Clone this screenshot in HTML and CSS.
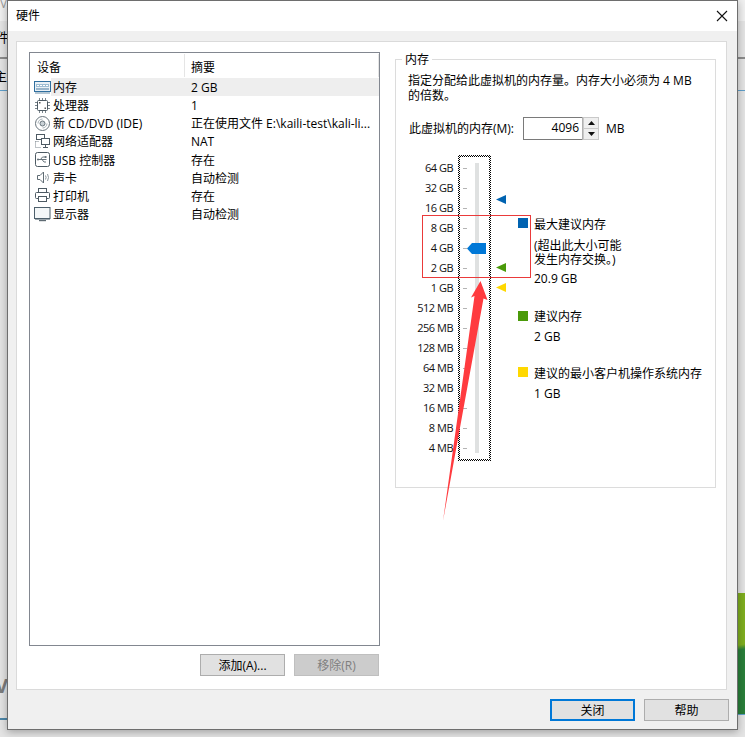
FILE: index.html
```html
<!DOCTYPE html>
<html lang="zh-CN">
<head>
<meta charset="utf-8">
<title>硬件</title>
<link rel="stylesheet" href="styles.css">
</head>
<body>
<div class="desktop">
  <div class="back-top"><span class="back-v">V</span></div>
  <span class="back-a">件(</span>
  <span class="back-b">主</span>
  <span class="back-c">V</span>
  <div class="back-line1"></div>
  <div class="back-line2"></div>
  <div class="back-line3"></div>
  <div class="back-green"></div>
</div>

<section class="dialog">
  <header class="titlebar">
    <span>硬件</span>
    <svg class="close-x" viewBox="0 0 12 12" width="12" height="12"><path d="M1 1L11 11M11 1L1 11" stroke="#111" stroke-width="1.1" fill="none"/></svg>
  </header>

  <div class="dialog-body">
    <div class="panel">
      <div class="left-col">
        <div class="list">
          <div class="list-head">
            <div class="head-a">设备</div>
            <div class="head-b">摘要</div>
          </div>
          <div class="row selected">
            <div class="ic"><svg viewBox="0 0 17 14" width="17" height="14"><rect x="0.5" y="1.5" width="16" height="10" fill="#e8f0f6" stroke="#2f6f9f"/><rect x="2" y="4" width="13" height="3" fill="#9dbdd3"/><path d="M3 5.5h2M6 5.5h2M9 5.5h2M12 5.5h2" stroke="#fff"/><path d="M2 9h13" stroke="#4a7a9f"/><path d="M1 13h15" stroke="#6a8ea8"/></svg></div>
            <div class="name">内存</div><div class="val">2 GB</div>
          </div>
          <div class="row">
            <div class="ic"><svg viewBox="0 0 17 17" width="17" height="17"><rect x="3.5" y="3.5" width="10" height="10" rx="1" fill="#fff" stroke="#4d5a63"/><path d="M5.5 1v2M8.5 1v2M11.5 1v2M5.5 14v2M8.5 14v2M11.5 14v2M1 5.500h2M1 8.500h2M1 11.500h2M14 5.500h2M14 8.500h2M14 11.500h2" stroke="#7a858c"/><rect x="5" y="5" width="1.500" height="1.500" fill="#555"/><rect x="10.500" y="10.500" width="1.500" height="1.500" fill="#555"/></svg></div>
            <div class="name">处理器</div><div class="val">1</div>
          </div>
          <div class="row">
            <div class="ic"><svg viewBox="0 0 17 17" width="17" height="17"><circle cx="8.500" cy="8.500" r="7" fill="#fff" stroke="#68747c"/><circle cx="8.500" cy="8.500" r="2.500" fill="#c9d1d6" stroke="#68747c"/><path d="M4 8.500a4.500 4.500 0 0 1 4.500-4.500" stroke="#a8b2b8" fill="none"/><path d="M13 8.500a4.500 4.500 0 0 1-4.500 4.500" stroke="#a8b2b8" fill="none"/></svg></div>
            <div class="name">新 CD/DVD (IDE)</div><div class="val">正在使用文件 E:\kaili-test\kali-li...</div>
          </div>
          <div class="row">
            <div class="ic"><svg viewBox="0 0 17 17" width="17" height="17"><rect x="2.500" y="1.500" width="8" height="5" fill="#fff" stroke="#4d5a63"/><rect x="7.500" y="5.500" width="8" height="6" fill="#fff" stroke="#4d5a63"/><path d="M11.500 12v2M9 14.500h5" stroke="#4d5a63"/><path d="M1.500 8.500h4M1.500 8.500v6M1.500 14.500h5" stroke="#7a858c" stroke-dasharray="1 1"/></svg></div>
            <div class="name">网络适配器</div><div class="val">NAT</div>
          </div>
          <div class="row">
            <div class="ic"><svg viewBox="0 0 17 17" width="17" height="17"><rect x="1.500" y="1.500" width="14" height="14" rx="2" fill="#fff" stroke="#4d5a63"/><path d="M3.500 8.500h9M6.500 8.500l2-2.500h2M8 8.500l2 2.500h2" stroke="#68747c" fill="none"/><rect x="10.500" y="5" width="2" height="2" fill="#68747c"/><circle cx="4" cy="8.500" r="1" fill="#68747c"/></svg></div>
            <div class="name">USB 控制器</div><div class="val">存在</div>
          </div>
          <div class="row">
            <div class="ic"><svg viewBox="0 0 17 17" width="17" height="17"><path d="M3.500 6.500h2.500l3.500-3.500v11l-3.500-3.500h-2.500z" fill="#fff" stroke="#5f6b73"/><path d="M11.500 6.500q1.200 2 0 4M13.500 5q2 3.500 0 7" stroke="#8a959c" fill="none"/></svg></div>
            <div class="name">声卡</div><div class="val">自动检测</div>
          </div>
          <div class="row">
            <div class="ic"><svg viewBox="0 0 17 17" width="17" height="17"><rect x="4.500" y="1.500" width="8" height="4" fill="#fff" stroke="#4d5a63"/><rect x="1.500" y="5.500" width="14" height="6" rx="1" fill="#fff" stroke="#4d5a63"/><rect x="4.500" y="9.500" width="8" height="5" fill="#fff" stroke="#4d5a63"/></svg></div>
            <div class="name">打印机</div><div class="val">存在</div>
          </div>
          <div class="row">
            <div class="ic"><svg viewBox="0 0 17 17" width="17" height="17"><rect x="0.500" y="1.500" width="15.500" height="11" fill="#f4f7f8" stroke="#4d5f6b"/><path d="M5 14.500h7" stroke="#5f6b73" stroke-width="1.400"/><path d="M1 13.500h15" stroke="#9aa5ac"/></svg></div>
            <div class="name">显示器</div><div class="val">自动检测</div>
          </div>
        </div>
        <div class="list-actions">
          <button class="btn" type="button">添加(A)...</button>
          <button class="btn btn-off" type="button">移除(R)</button>
        </div>
      </div>

      <div class="group">
        <div class="legend">内存</div>
        <p class="desc">指定分配给此虚拟机的内存量。内存大小必须为 4 MB<br>的倍数。</p>
        <div class="mem-row">
          <span class="mem-label">此虚拟机的内存(M):</span>
          <div class="spin">
            <span class="spin-val">4096</span>
            <div class="spin-btns">
              <span class="spin-btn"><svg viewBox="0 0 7 4" width="7" height="4"><path d="M3.500 0L7 4H0z" fill="#111"/></svg></span>
              <span class="spin-btn"><svg viewBox="0 0 7 4" width="7" height="4"><path d="M0 0H7L3.500 4z" fill="#111"/></svg></span>
            </div>
          </div>
          <span class="mem-unit">MB</span>
        </div>

        <div class="scale">
          <div class="labels">
            <div>64 GB</div><div>32 GB</div><div>16 GB</div><div>8 GB</div><div>4 GB</div><div>2 GB</div><div>1 GB</div><div>512 MB</div><div>256 MB</div><div>128 MB</div><div>64 MB</div><div>32 MB</div><div>16 MB</div><div>8 MB</div><div>4 MB</div>
          </div>
          <div class="slider">
            <div class="ticks">
              <i></i><i></i><i></i><i></i><i></i><i></i><i></i><i></i><i></i><i></i><i></i><i></i><i></i><i></i><i></i>
            </div>
            <div class="track"></div>
            <svg class="thumb" viewBox="0 0 19 11" width="19" height="11"><path d="M0 5.500L5 0H19V11H5z" fill="#0078d7"/></svg>
          </div>
          <div class="markers">
            <svg class="mark mark-max" viewBox="0 0 10 9" width="10" height="9"><path d="M0 4.500L10 0V9z" fill="#0063b1"/></svg>
            <svg class="mark mark-rec" viewBox="0 0 10 9" width="10" height="9"><path d="M0 4.500L10 0V9z" fill="#4a9a0a"/></svg>
            <svg class="mark mark-min" viewBox="0 0 10 9" width="10" height="9"><path d="M0 4.500L10 0V9z" fill="#ffd800"/></svg>
          </div>
          <div class="key">
            <div class="key-item">
              <i class="sq sq-blue"></i>
              <div>
                <div class="key-title">最大建议内存</div>
                <div class="key-note">(超出此大小可能<br>发生内存交换。)</div>
                <div class="key-val">20.9 GB</div>
              </div>
            </div>
            <div class="key-item key-second">
              <i class="sq sq-green"></i>
              <div>
                <div class="key-title">建议内存</div>
                <div class="key-val">2 GB</div>
              </div>
            </div>
            <div class="key-item key-third">
              <i class="sq sq-yellow"></i>
              <div>
                <div class="key-title">建议的最小客户机操作系统内存</div>
                <div class="key-val">1 GB</div>
              </div>
            </div>
          </div>
        </div>
      </div>
    </div>
  </div>

  <footer class="dialog-foot">
    <button class="btn btn-main" type="button">关闭</button>
    <button class="btn" type="button">帮助</button>
  </footer>
</section>

<div class="red-box"></div>
<svg class="red-arrow" viewBox="0 0 745 737" width="745" height="737"><path d="M480.500 281L487.500 300L483.500 298.500L443 521L474.500 296L471 297.500z" fill="#ff3b3f"/></svg>
</body>
</html>
```

FILE: styles.css
```css
* { box-sizing: border-box; }
html, body { margin: 0; padding: 0; }
body {
  width: 745px;
  height: 737px;
  overflow: hidden;
  position: relative;
  background: #e4e4e4;
  font-family: "Open Sans", "Noto Sans CJK SC", sans-serif;
  font-size: 12px;
  line-height: 16px;
  color: #000;
}

/* windows behind the dialog */
.desktop { position: absolute; inset: 0; overflow: hidden; }
.back-top { position: absolute; left: 0; top: 0; width: 745px; height: 21px; background: #f0f0f0; }
.back-v { position: absolute; left: 0; top: -4px; color: #9a9a9a; }
.back-a { position: absolute; left: -4px; top: 29px; font-size: 13px; }
.back-b { position: absolute; left: -6px; top: 68px; font-size: 13px; }
.back-c { position: absolute; left: -5px; top: 674px; font-size: 20px; line-height: 24px; font-weight: 700; color: #7d7d7d; }
.back-line1 { position: absolute; left: 0; top: 57px; width: 745px; height: 2px; background: #8c8c8c; }
.back-line2 { position: absolute; left: 0; top: 90px; width: 745px; height: 1px; background: #5f9fca; }
.back-line3 { position: absolute; left: 0; top: 718px; width: 8px; height: 2px; background: #4d86a8; }
.back-green {
  position: absolute;
  left: 735px;
  top: 593px;
  width: 10px;
  height: 122px;
  background: linear-gradient(170deg, #7fae1f 0 43%, #2a7f3a 47% 100%);
  border-bottom: 1px solid #5f9fca;
}

/* dialog */
.dialog {
  position: absolute;
  left: 7px;
  top: 0;
  width: 731px;
  height: 730px;
  display: flex;
  flex-direction: column;
  background: #f0f0f0;
  border: 1px solid #6e6e6e;
  box-shadow: 0 2px 8px rgba(0, 0, 0, .3);
}
.titlebar {
  height: 30px;
  flex: none;
  display: flex;
  align-items: center;
  justify-content: space-between;
  padding: 0 9px 0 8px;
  background: #fff;
  font-size: 12px;
}
.close-x { display: block; }
.dialog-body { flex: none; padding: 10px 10px 0 8px; }
.panel {
  height: 649px;
  display: flex;
  gap: 15px;
  padding: 10px 0 0 12px;
  background: #fff;
  border: 1px solid #dadada;
}
.left-col { width: 351px; flex: none; }

/* device list */
.list {
  height: 594px;
  background: #fff;
  border: 1px solid #828790;
}
.list-head {
  height: 25px;
  display: flex;
  align-items: center;
}
.head-a { width: 155px; height: 23px; padding: 6px 0 0 7px; border-right: 1px solid #e5e5e5; line-height: 16px; }
.head-b { width: 194px; height: 23px; padding: 6px 0 0 6px; border-right: 1px solid #e5e5e5; line-height: 16px; }
.row {
  height: 18.15px;
  display: grid;
  grid-template-columns: 21px 134px 194px;
  grid-template-rows: 18.15px;
  align-items: stretch;
  line-height: 18px;
}
.ic { display: flex; align-items: center; justify-content: flex-end; }
.ic svg { display: block; flex: none; }
.name { padding: 1px 0 0 2px; white-space: nowrap; }
.val { padding: 1px 0 0 6px; white-space: nowrap; }
.selected .name, .selected .val { background: #eeeeee; }

.list-actions {
  display: flex;
  justify-content: flex-end;
  gap: 9px;
  padding: 8px 1px 0 0;
}

/* buttons */
.btn {
  width: 85px;
  height: 22px;
  padding: 1px 0 0;
  margin: 0;
  background: #e1e1e1;
  border: 1px solid #adadad;
  color: #000;
  font: inherit;
  line-height: 18px;
}
.btn-off { background: #cccccc; border-color: #bfbfbf; color: #7f7f7f; }
.btn-main { border: 2px solid #0078d7; }

/* memory group */
.group {
  width: 321px;
  height: 429px;
  flex: none;
  margin-top: 7px;
  border: 1px solid #dcdcdc;
}
.legend {
  width: fit-content;
  margin: -8px 0 0 6px;
  padding: 0 3px;
  background: #fff;
}
.desc {
  margin: 5px 0 0 12px;
  line-height: 15px;
  white-space: nowrap;
}
.mem-row {
  display: flex;
  align-items: center;
  margin: 14px 0 0 13px;
}
.mem-label { width: 114px; flex: none; white-space: nowrap; }
.spin {
  width: 76px;
  height: 23px;
  display: flex;
  justify-content: space-between;
  border: 1px solid #7a7a7a;
  background: #fff;
}
.spin-val { flex: 1; text-align: right; padding-right: 3px; line-height: 19px; }
.spin-btns {
  width: 17px;
  display: flex;
  flex-direction: column;
  gap: 1px;
  padding: 1px;
  background: #c9c9c9;
  border-left: 1px solid #b0b0b0;
  margin: -1px -1px -1px 0;
}
.spin-btn {
  flex: 1;
  display: flex;
  align-items: center;
  justify-content: center;
  background: #efefef;
}
.spin-btn svg { display: block; }
.mem-unit { margin-left: 7px; }

/* slider */
.scale {
  display: flex;
  margin: 15px 0 0 0;
}
.labels {
  width: 57px;
  padding-top: 3px;
  text-align: right;
  font-size: 11px;
  letter-spacing: -.5px;
  color: #111;
}
.labels div { height: 20px; line-height: 20px; white-space: nowrap; }
.slider {
  position: relative;
  width: 33px;
  height: 306px;
  margin-left: 5px;
  border: 2px solid transparent;
  background:
    linear-gradient(#fff, #fff) padding-box,
    repeating-conic-gradient(#000 0 25%, #fff 0 50%) 0 0 / 2px 2px border-box;
}
.ticks { padding-top: 1px; }
.ticks i {
  display: flex;
  height: 20px;
  align-items: center;
  padding-left: 3px;
}
.ticks i::before {
  content: "";
  display: block;
  width: 4px;
  height: 1px;
  background: #b4b4b4;
}
.track {
  position: absolute;
  left: 15px;
  top: 6px;
  width: 4px;
  height: 290px;
  background: #dfe1e1;
}
.thumb { position: absolute; left: 7px; top: 86px; display: block; }
.markers { position: relative; width: 27px; flex: none; }
.mark { position: absolute; left: 5px; display: block; }
.mark-max { top: 40px; }
.mark-rec { top: 108px; }
.mark-min { top: 128px; }

/* legend */
.key { padding-top: 62px; white-space: nowrap; }
.key-item { display: flex; gap: 6px; align-items: flex-start; }
.key-second { margin-top: 22px; }
.key-third { margin-top: 21px; }
.sq { width: 10px; height: 10px; margin-top: 1px; flex: none; display: block; }
.sq-blue { background: #0063b1; }
.sq-green { background: #4a9a0a; margin-top: 2px; }
.sq-yellow { background: #ffd800; }
.key-note { margin-top: 6px; line-height: 14px; }
.key-val { margin-top: 4px; }

/* footer */
.dialog-foot {
  flex: none;
  display: flex;
  justify-content: flex-end;
  gap: 9px;
  padding: 9px 8px 0 0;
}

/* annotations over the screenshot */
.red-box {
  position: absolute;
  left: 422px;
  top: 215px;
  width: 109px;
  height: 63px;
  border: 1px solid #ea3a3a;
}
.red-arrow { position: absolute; left: 0; top: 0; display: block; pointer-events: none; }
```
